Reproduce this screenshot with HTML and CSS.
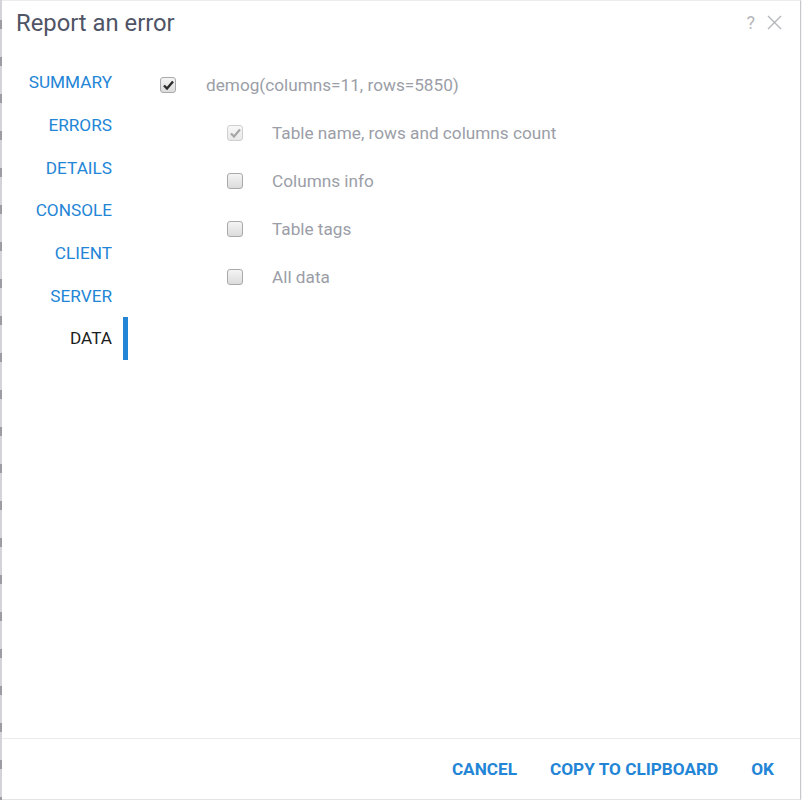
FILE: index.html
```html
<!DOCTYPE html>
<html>
<head>
<meta charset="utf-8">
<link rel="stylesheet" href="styles.css">
</head>
<body>
<div class="page">
  <div class="edge"></div>
  <div class="dialog">
    <div class="header">
      <div class="title">Report an error</div>
      <div class="tools">
        <span class="help">?</span>
        <svg class="close" width="15" height="15" viewBox="0 0 15 15"><path d="M1 1 L14 14 M14 1 L1 14" stroke="#b4b6bc" stroke-width="1.4" fill="none"/></svg>
      </div>
    </div>
    <div class="body">
      <div class="nav">
        <div class="nav-item">SUMMARY</div>
        <div class="nav-item">ERRORS</div>
        <div class="nav-item">DETAILS</div>
        <div class="nav-item">CONSOLE</div>
        <div class="nav-item">CLIENT</div>
        <div class="nav-item">SERVER</div>
        <div class="nav-item active">DATA</div>
      </div>
      <div class="content">
        <div class="row main-row">
          <span class="cb checked"><svg width="11" height="10" viewBox="0 0 11 10"><path d="M1 5.5 L4 8.5 L10 1.5" stroke="#2d2d2d" stroke-width="2.4" fill="none"/></svg></span>
          <span class="label">demog(columns=11, rows=5850)</span>
        </div>
        <div class="sub">
          <div class="row sub-row">
            <span class="cb checked disabled"><svg width="11" height="10" viewBox="0 0 11 10"><path d="M1 5.5 L4 8.5 L10 1.5" stroke="#a6a6a6" stroke-width="2.2" fill="none"/></svg></span>
            <span class="label">Table name, rows and columns count</span>
          </div>
          <div class="row sub-row">
            <span class="cb"></span>
            <span class="label">Columns info</span>
          </div>
          <div class="row sub-row">
            <span class="cb"></span>
            <span class="label">Table tags</span>
          </div>
          <div class="row sub-row">
            <span class="cb"></span>
            <span class="label">All data</span>
          </div>
        </div>
      </div>
    </div>
    <div class="footer">
      <span class="btn">CANCEL</span>
      <span class="btn">COPY TO CLIPBOARD</span>
      <span class="btn">OK</span>
    </div>
  </div>
  <div class="rim"></div>
</div>
</body>
</html>
```
FILE: styles.css
```css
html, body {
  margin: 0;
  padding: 0;
  background: #ffffff;
  font-family: Roboto, "Liberation Sans", sans-serif;
}
.page {
  display: flex;
  width: 802px;
  height: 800px;
}
.edge {
  width: 2px;
  background: repeating-linear-gradient(to bottom, #d4d4d8 0px, #d4d4d8 20px, #9c9ca2 20px, #9c9ca2 29px, #d4d4d8 29px, #d4d4d8 37px);
}
.rim {
  width: 1px;
  background: #f4f4f4;
}
.dialog {
  flex: 1;
  display: flex;
  flex-direction: column;
  border-top: 1px solid #ececec;
  border-right: 1px solid #c8c8cc;
  border-bottom: 1px solid #e4e4e4;
  box-sizing: border-box;
  background: #fff;
}
.header {
  height: 43px;
  display: flex;
  align-items: center;
  justify-content: space-between;
  padding: 0 18px 0 14px;
}
.title {
  font-size: 23.8px;
  color: #4f5466;
}
.tools {
  display: flex;
  align-items: center;
  gap: 12px;
}
.help {
  font-size: 18px;
  color: #b4b6bc;
}
.close {
  display: block;
}
.body {
  flex: 1;
  display: flex;
  padding-top: 17px;
}
.nav {
  width: 126px;
  display: flex;
  flex-direction: column;
}
.nav-item {
  height: 42.67px;
  display: flex;
  align-items: center;
  justify-content: flex-end;
  padding-right: 16px;
  font-size: 17.2px;
  color: #2385d6;
  box-sizing: border-box;
}
.nav-item.active {
  color: #1d1d1d;
  border-right: 5px solid #2385d6;
  padding-right: 11px;
}
.content {
  padding-left: 32px;
}
.row {
  display: flex;
  align-items: center;
}
.main-row {
  height: 50px;
  margin-top: -1px;
}
.main-row .label {
  margin-left: 30px;
}
.sub {
  padding-left: 67px;
  margin-top: -1px;
}
.sub-row {
  height: 48px;
}
.sub-row .label {
  margin-left: 29px;
}
.label {
  font-size: 17.2px;
  color: #9b9ea7;
}
.cb {
  width: 14px;
  height: 14px;
  border: 1px solid #a9a9ad;
  border-radius: 3px;
  background: linear-gradient(to bottom, #f4f4f4, #dcdcdc);
  display: flex;
  align-items: center;
  justify-content: center;
  flex: none;
}
.cb.disabled {
  border-color: #cfcfd2;
  background: linear-gradient(to bottom, #f8f8f8, #e8e8e8);
}
.footer {
  height: 60px;
  border-top: 1px solid #ececec;
  display: flex;
  align-items: center;
  justify-content: flex-end;
  gap: 33px;
  padding-right: 26px;
}
.btn {
  font-size: 17.2px;
  font-weight: 700;
  color: #2385d6;
}
```
